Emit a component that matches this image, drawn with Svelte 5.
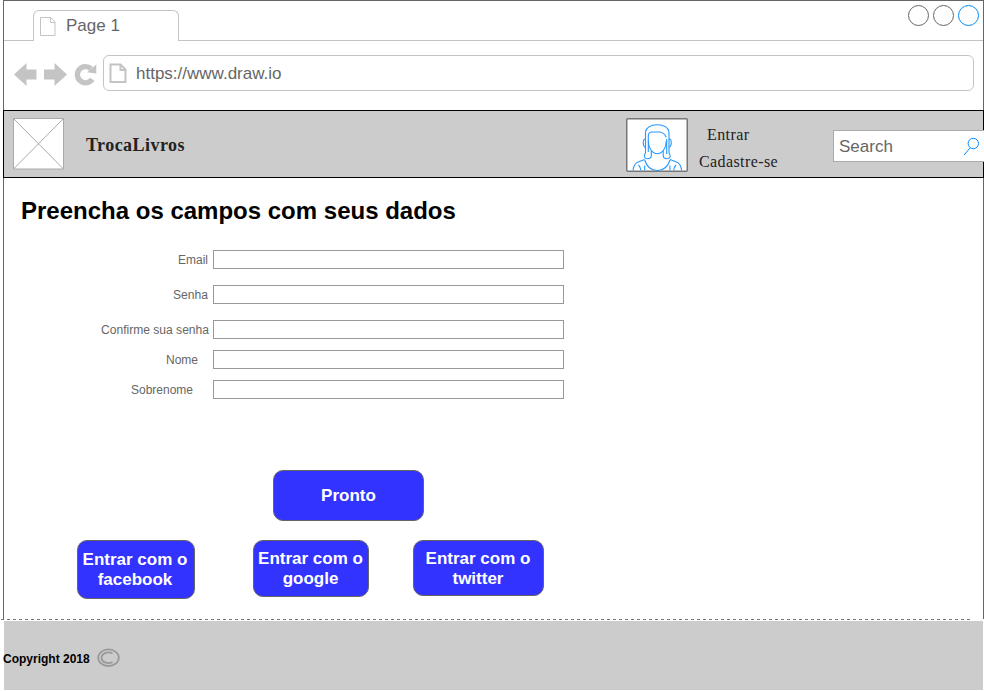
<script>
  const fields = [
    { label: 'Email', end: 5, gap: 15, width: 30 },
    { label: 'Senha', end: 5, gap: 15, width: 35 },
    { label: 'Confirme sua senha', end: 4, gap: 10, width: 108 },
    { label: 'Nome', end: 15, gap: 10, width: 32 },
    { label: 'Sobrenome', end: 20, gap: 0, width: 62 }
  ];
  const socials = [
    { name: 'facebook', left: 73, width: 118, height: 59, pad: 0, shift: 2 },
    { name: 'google', left: 58, width: 116, height: 57, pad: 0, shift: 1 },
    { name: 'twitter', left: 44, width: 131, height: 56, pad: 1, shift: 1 }
  ];
</script>

<div class="page">
  <div class="window">
    <div class="tabs">
      <div class="tab">
        <svg width="18" height="20" viewBox="0 0 18 20"><path d="M1.500 .5h10.500l4 4.500v13.500H1.500zM11.500 .5v5h4.500" /></svg>
        <span>Page 1</span>
      </div>
      <div class="controls"><i></i><i></i><i class="active"></i></div>
    </div>
    <div class="toolbar">
      <svg class="nav" width="84" height="26" viewBox="0 0 84 26">
        <path d="M0 12.500L12.500 1v6.500H22.500v10h-10V24zM53 12.500L40.500 1v6.500H30v10h10.500V24z" />
        <path class="reload" d="M78.200 17.300A8.100 8.100 0 1 1 77 6.800" />
        <path d="M82.300 2.500v9l-9.300-1.300z" />
      </svg>
      <div class="address">
        <svg width="19" height="21" viewBox="0 0 19 21"><path d="M1.500 1.500h10l5 5v12.500h-15zM11.500 1.500v5.500h5" /></svg>
        <span>https://www.draw.io</span>
      </div>
    </div>
    <header>
      <svg class="logo" width="51" height="52" viewBox="0 0 51 52">
        <path d="M.5 .5h50v50.500h-50z" fill="#fff" /><path d="M.5 .5l50 50.500M50.500 .5L.5 51" />
      </svg>
      <strong>TrocaLivros</strong>
      <svg class="avatar" width="62" height="54" viewBox="0 0 62 54">
        <rect x=".75" y=".75" width="60.500" height="52.500" rx="1" />
        <g>
          <path d="M19.500 35V14C20.500 9 25 6.700 31.300 6.700S42 9 43 14V35" />
          <path d="M22.300 34V18C22.300 15 23.500 14 26 14H34C37 14.500 39 16.500 40.300 19.300M40.700 21V36" />
          <path d="M22.300 23c0 7 4 12.700 9 12.700s9-5.700 9-12.700" />
          <path d="M19.500 21c-3 0-3 7 0 8.500M43 21c3 0 3 7 0 8.500" />
          <path d="M19.500 35c-2 3-1.500 5.700 1.800 5.700 3 0 4-1.200 4-3.200V33M43 35c2 3 1.500 5.700-1.800 5.700-3 0-4-1.200-4-3.200V33" />
          <path d="M18.700 41.500l-6 2.200C9 45 7.500 48 7 52.300M44 41.500l6 2.200c3.700 1.300 5.200 4.300 5.600 8.600" />
          <path d="M18.700 42c2 6.500 6.500 10.500 12.600 10.500S42 48.500 44 42M12.500 47c1.500 1.500 2 3 2.200 5.300M18.700 47.500v4.800M50 47c-1.500 1.500-2 3-2.200 5.300M43.900 47.500v4.800" />
        </g>
      </svg>
      <nav><a href="#entrar">Entrar</a><a href="#cadastro">Cadastre-se</a></nav>
      <div class="search">
        <span>Search</span>
        <svg width="17" height="19" viewBox="0 0 17 19"><circle cx="10.300" cy="6.500" r="5.200" /><path d="M7 11L1 18" /></svg>
      </div>
    </header>
    <main>
      <h1>Preencha os campos com seus dados</h1>
      <form>
        {#each fields as f}
          <div class="field" style:margin-bottom="{f.gap}px">
            <div class="label" style:padding-right="{f.end}px"><svg width={f.width} height="16"><text x="0" y="12" textLength={f.width} lengthAdjust="spacingAndGlyphs">{f.label}</text></svg></div>
            <div class="input"></div>
          </div>
        {/each}
      </form>
      <button class="submit">Pronto</button>
      <div class="socials">
        {#each socials as s}
          <button style:margin-left="{s.left}px" style:width="{s.width}px" style:height="{s.height}px" style:padding-top="{s.pad}px" style:padding-right="{s.shift}px">Entrar com o<br />{s.name}</button>
        {/each}
      </div>
    </main>
  </div>
  <div class="divider"></div>
  <footer>
    <strong>Copyright 2018</strong>
    <svg width="23" height="20" viewBox="0 0 23 20">
      <ellipse cx="11.500" cy="9.700" rx="10.300" ry="8.300" />
      <path d="M15.500 5.300C10 3 4.500 5.500 4.500 9.700S10 16.500 15.500 14.100" />
    </svg>
  </footer>
</div>

<style>
  :global(body) { background: #fff; overflow: hidden; }
  .page { width: 984px; height: 691px; font-family: "Liberation Sans", Arial, sans-serif; overflow: hidden; color: #666; }
  .page * { box-sizing: border-box; }
  svg { display: block; flex: none; fill: none; }
  .window { margin-left: 3px; width: 981px; height: 619px; border: 1px solid #666; border-bottom: 0; }
  .tabs { height: 40px; border-bottom: 1px solid #c4c4c4; padding: 9px 4px 0 29px; display: flex; justify-content: space-between; }
  .tab { width: 146px; height: 31px; border: 1px solid #c4c4c4; border-bottom: 0; border-radius: 6px 6px 0 0; background: #fff; display: flex; padding: 6px 0 0 5px; }
  .tab svg, .address svg { stroke: #c4c4c4; }
  .address svg { stroke-width: 2; }
  .tab span { font-size: 17px; line-height: 18px; margin-left: 9px; }
  .controls { display: flex; gap: 4px; margin-top: -5px; }
  .controls i { width: 21px; height: 21px; border: 1px solid #666; border-radius: 50%; }
  .controls .active { border-color: #008cff; }
  .toolbar { height: 69px; padding: 14px 9px 0 10px; display: flex; }
  .nav { margin: 7px 5px 0 0; fill: #c4c4c4; }
  .nav .reload { fill: none; stroke: #c4c4c4; stroke-width: 5.3; }
  .address { height: 36px; flex: 1; border: 1px solid #c4c4c4; border-radius: 6px; display: flex; align-items: center; padding-left: 5px; }
  .address span { margin: 2px 0 0 8px; font-size: 17px; }
  header { width: 981px; height: 68px; margin-left: -1px; border: 1px solid #000; background: #ccc; display: flex; align-items: flex-start; color: #222; font-family: "Liberation Serif", "Times New Roman", serif; }
  .logo { margin: 7px 0 0 9px; stroke: #aaa; }
  header strong { flex: none; width: 100px; margin: 23px 0 0 22px; font-size: 18px; line-height: 22px; letter-spacing: .45px; }
  .avatar { margin: 7px 0 0 440px; stroke: #777; stroke-width: 1.5; }
  .avatar rect { fill: #fff; }
  .avatar g { stroke: #2398ff; stroke-width: 1.1; }
  nav { flex: none; margin: 10px 0 0 11px; width: 134px; display: flex; flex-direction: column; }
  nav a { color: #222; text-decoration: none; font-size: 16px; line-height: 27px; white-space: nowrap; letter-spacing: .4px; }
  nav a:first-child { margin-left: 8px; }
  .search { flex: none; width: 151px; height: 32px; margin-top: 19px; border: 1px solid #aaa; border-right: 0; background: #fff; font-family: "Liberation Sans", Arial, sans-serif; color: #666; font-size: 17px; display: flex; align-items: center; padding: 0 4px 0 5px; justify-content: space-between; }
  .search span { margin-top: 2px; }
  .search svg { stroke: #008cff; }
  h1 { margin: 0; padding: 18px 0 0 17px; color: #000; font-size: 24px; line-height: 30px; letter-spacing: 0; height: 72px; }
  .field { display: flex; height: 20px; }
  .label { width: 209px; display: flex; justify-content: flex-end; padding-top: 2px; }
  .label text { font-size: 12px; fill: #666; }
  .input { width: 351px; height: 19px; border: 1px solid #999; }
  button { display: flex; align-items: center; justify-content: center; flex: none; padding: 0; background: #33f; border: 1px solid #666; border-radius: 10px; color: #fff; font: bold 17px/20px "Liberation Sans", Arial, sans-serif; text-align: center; }
  .submit { width: 151px; height: 51px; margin: 70px 0 0 269px; }
  .socials { display: flex; align-items: flex-start; margin-top: 19px; }
  .divider { width: 969px; height: 1px; margin-left: 1px; background: repeating-linear-gradient(90deg, #777 0 3px, transparent 3px 6px); }
  footer { height: 69px; margin: 1px 1px 0 4px; background: #ccc; display: flex; align-items: center; color: #000; }
  footer strong { width: 87px; margin: 6px 7px 0 -1px; font-size: 12px; line-height: 14px; white-space: nowrap; }
  footer svg { margin-top: 5px; stroke: #999; stroke-width: 1.8; }
</style>
